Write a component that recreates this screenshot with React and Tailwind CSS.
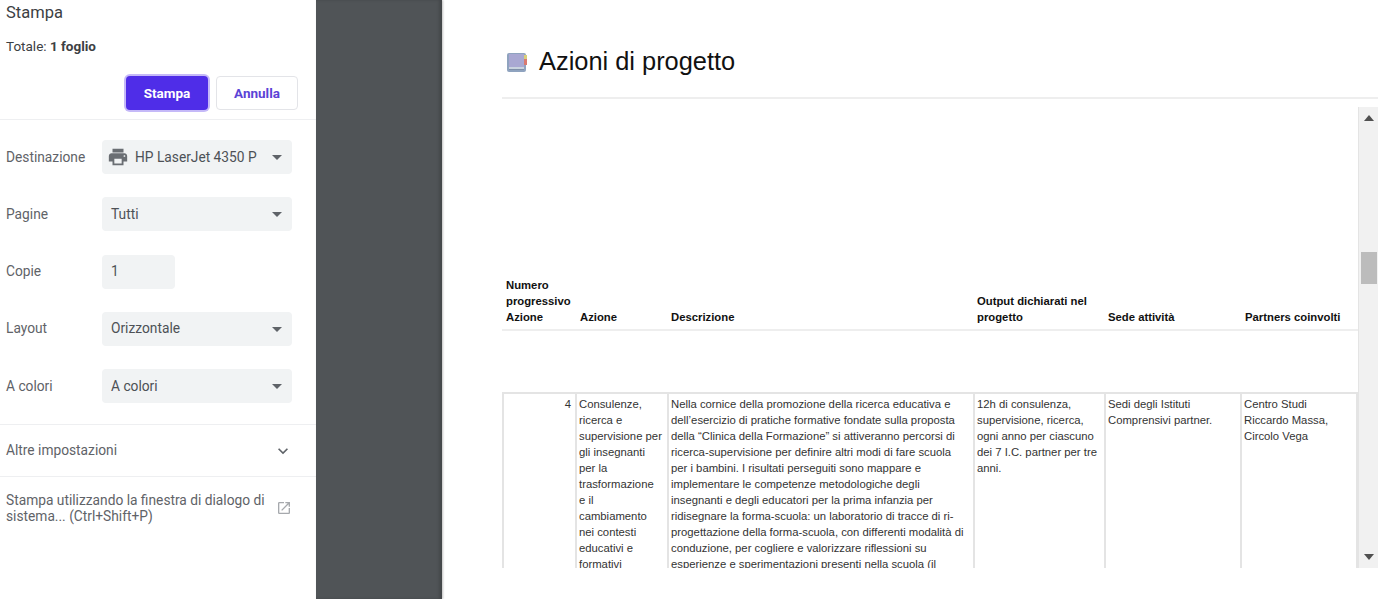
import { MdArrowDropDown, MdExpandMore, MdOpenInNew, MdPrint } from 'react-icons/md';

const settings = [
  { label: 'Destinazione', value: 'HP LaserJet 4350 P', printer: true },
  { label: 'Pagine', value: 'Tutti' },
  { label: 'Copie', value: '1', input: true },
  { label: 'Layout', value: 'Orizzontale' },
  { label: 'A colori', value: 'A colori' },
];

const columns = [
  { head: 'w-[74px]', body: 'w-[71px]', title: ['Numero', 'progressivo', 'Azione'] },
  { head: 'w-[91px]', body: 'w-[92px]', title: ['Azione'] },
  { head: 'w-[306px]', body: 'w-[306px]', title: ['Descrizione'] },
  { head: 'w-[131px]', body: 'w-[131px]', title: ['Output dichiarati nel', 'progetto'] },
  { head: 'w-[137px]', body: 'w-[136px]', title: ['Sede attività'] },
  { head: 'w-[117px]', body: 'flex-1', title: ['Partners coinvolti'] },
];

const row = [
  ['4'],
  ['Consulenze,', 'ricerca e', 'supervisione per', 'gli insegnanti', 'per la', 'trasformazione', 'e il', 'cambiamento', 'nei contesti', 'educativi e', 'formativi'],
  [
    'Nella cornice della promozione della ricerca educativa e',
    'dell’esercizio di pratiche formative fondate sulla proposta',
    'della “Clinica della Formazione” si attiveranno percorsi di',
    'ricerca-supervisione per definire altri modi di fare scuola',
    'per i bambini. I risultati perseguiti sono mappare e',
    'implementare le competenze metodologiche degli',
    'insegnanti e degli educatori per la prima infanzia per',
    'ridisegnare la forma-scuola: un laboratorio di tracce di ri-',
    'progettazione della forma-scuola, con differenti modalità di',
    'conduzione, per cogliere e valorizzare riflessioni su',
    'esperienze e sperimentazioni presenti nella scuola (il',
  ],
  ['12h di consulenza,', 'supervisione, ricerca,', 'ogni anno per ciascuno', 'dei 7 I.C. partner per tre', 'anni.'],
  ['Sedi degli Istituti', 'Comprensivi partner.'],
  ['Centro Studi', 'Riccardo Massa,', 'Circolo Vega'],
];

function Lines({ lines }) {
  return lines.map((line) => <div key={line}>{line}</div>);
}

function BookIcon() {
  return (
    <svg width="22" height="21" viewBox="0 0 22 21" className="shrink-0">
      <rect x="1" y="1" width="19" height="19" rx="2" fill="#8fa3bf" />
      <rect x="3" y="2" width="15" height="13" fill="#a9a8d2" />
      <rect x="18" y="3" width="3" height="4" fill="#d9cf7a" />
      <rect x="18" y="7" width="3" height="6" fill="#d97a70" />
      <rect x="3" y="15" width="15" height="2" fill="#c9d3df" />
      <rect x="3" y="17" width="15" height="1" fill="#7f90a8" />
    </svg>
  );
}

function Sidebar() {
  return (
    <aside className="flex w-[316px] shrink-0 flex-col bg-white font-['Roboto',sans-serif] text-[13.75px] text-[#5f6368]">
      <h1 className="h-[26px] pl-[6px] text-[16.5px] leading-[26px] text-[#3c4043]">Stampa</h1>
      <p className="mt-[12px] h-[16px] pl-[6px] text-[13.5px] leading-[16px] text-[#3c4043]">
        Totale: <span className="font-bold">1 foglio</span>
      </p>
      <div className="mt-[22px] flex justify-end gap-[8px] pr-[18px]">
        <button className="h-[34px] w-[82px] rounded-[4px] bg-[#4f2de8] text-[13.5px] font-bold text-white ring-2 ring-[#c5b9f8]">
          Stampa
        </button>
        <button className="h-[34px] w-[82px] rounded-[4px] border border-[#e3e4e8] bg-white text-[13.5px] font-bold text-[#5b43d6]">
          Annulla
        </button>
      </div>
      <div className="mt-[9px] flex flex-col gap-[23.25px] border-y border-[#eeeff1] pt-[20px] pb-[21px]">
        {settings.map((item) => (
          <div key={item.label} className="flex items-center pl-[6px]">
            <span className="w-[96px]">{item.label}</span>
            <div
              className={`flex h-[34px] items-center rounded-[4px] bg-[#f1f3f4] pl-[9px] text-[#4d5156] ${
                item.input ? 'w-[73px]' : 'w-[190px]'
              }`}
            >
              {item.printer && <MdPrint size={22} className="mr-[6px] -ml-[4px] text-[#6a6e73]" />}
              <span className="flex-1 whitespace-nowrap">{item.value}</span>
              {!item.input && <MdArrowDropDown size={24} className="mr-[3px] text-[#5f6368]" />}
            </div>
          </div>
        ))}
      </div>
      <div className="flex h-[52px] items-center justify-between border-b border-[#eeeff1] pl-[6px] pr-[23px]">
        <span>Altre impostazioni</span>
        <MdExpandMore size={20} className="text-[#5f6368]" />
      </div>
      <div className="flex items-center justify-between pt-[15px] pl-[6px] pr-[24px]">
        <span className="leading-[16px]">
          Stampa utilizzando la finestra di dialogo di
          <br />
          sistema... (Ctrl+Shift+P)
        </span>
        <MdOpenInNew size={16} className="text-[#a6a9ad]" />
      </div>
    </aside>
  );
}

function Scrollbar() {
  return (
    <div className="flex w-[20px] shrink-0 flex-col items-center border-l border-[#e4e4e4] bg-[#f1f1f1]">
      <svg width="10" height="6" viewBox="0 0 10 6" className="mt-[8px] text-[#505050]">
        <path d="M5 0 10 6H0Z" fill="currentColor" />
      </svg>
      <div className="mt-[131px] h-[32px] w-[16px] bg-[#bcbcbc]" />
      <svg width="10" height="6" viewBox="0 0 10 6" className="mt-auto mb-[8px] text-[#505050]">
        <path d="M5 6 10 0H0Z" fill="currentColor" />
      </svg>
    </div>
  );
}

function ActionsTable() {
  return (
    <div className="flex h-[461px]">
      <div className="w-[856px] shrink-0 overflow-hidden font-['Liberation_Sans',sans-serif] text-[11.3px] leading-[16px] text-[#333]">
        <div className="flex h-[224px] items-end border-b-2 border-[#eeeeee] pb-[4px] font-bold text-[#111]">
          {columns.map((col) => (
            <div key={col.head} className={`${col.head} shrink-0 whitespace-nowrap pl-[4px]`}>
              <Lines lines={col.title} />
            </div>
          ))}
        </div>
        <div className="mt-[61px] flex h-[300px] border-x-2 border-t-2 border-[#e4e4e4]">
          {columns.map((col, i) => (
            <div
              key={col.head}
              className={`${col.body} shrink-0 whitespace-nowrap pt-[2px] ${
                i > 0 ? 'border-l-2 border-[#e4e4e4] pl-[2px]' : 'pr-[4px] text-right'
              }`}
            >
              <Lines lines={row[i]} />
            </div>
          ))}
        </div>
      </div>
      <Scrollbar />
    </div>
  );
}

export default function App() {
  return (
    <div className="flex h-[599px] w-[1400px] overflow-hidden bg-white">
      <Sidebar />
      <div className="w-[126px] shrink-0 bg-[#505457] shadow-[inset_-3px_0_3px_rgba(0,0,0,0.15),1px_0_2px_rgba(0,0,0,0.25)]" />
      <main className="w-[958px] shrink-0 pl-[60px] pr-[22px]">
        <div className="flex h-[99px] items-start gap-[11px] border-b-2 border-[#eeeeee] pt-[52px] pl-[4px]">
          <BookIcon />
          <h2 className="-mt-[4px] font-['Liberation_Sans',sans-serif] text-[25.4px] leading-[26px] text-[#111]">
            Azioni di progetto
          </h2>
        </div>
        <div className="mt-[8px]">
          <ActionsTable />
        </div>
      </main>
    </div>
  );
}
